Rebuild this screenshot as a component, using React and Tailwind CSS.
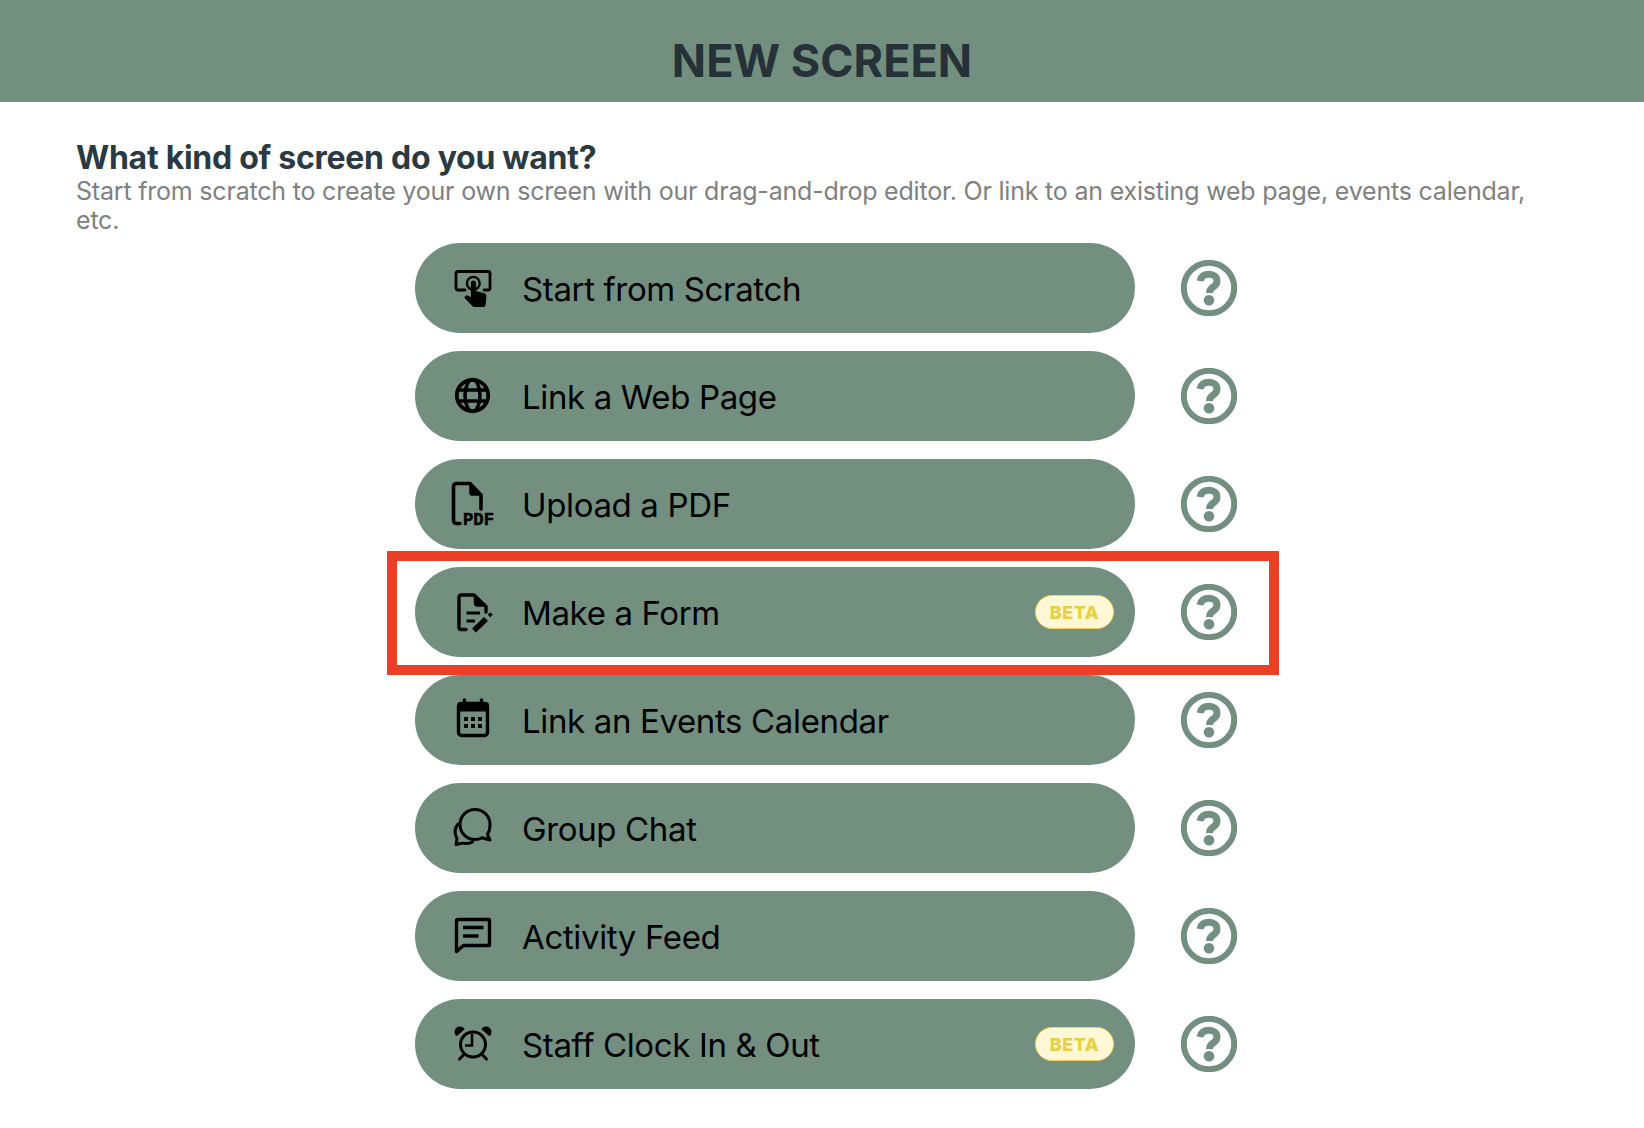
import React from "react";

const Svg = ({ children }) => (
  <svg width="44" height="44" viewBox="0 0 44 44" fill="none" stroke="#000" strokeWidth="3.400" strokeLinecap="round" strokeLinejoin="round" className="overflow-visible">
    {children}
  </svg>
);

const TouchIcon = () => (
  <Svg>
    <path d="M14 24H7a2 2 0 0 1-2-2V7.500a2 2 0 0 1 2-2h30a2 2 0 0 1 2 2V22a2 2 0 0 1-2 2h-4" strokeWidth="2.800" />
    <circle cx="22.300" cy="17.300" r="6.400" strokeWidth="2.400" />
    <path d="M20.500 17a1.900 1.900 0 0 1 3.800 0v8.500l8 2a3 3 0 0 1 2.500 3.200l-.8 8a2 2 0 0 1-2 1.800H24a3 3 0 0 1-2.200-1L14 31.500l1.600-1.600 4.900 2.100z" fill="#000" strokeWidth="1.200" />
  </Svg>
);
const GlobeIcon = () => (
  <Svg>
    <circle cx="21.500" cy="21.500" r="15.700" strokeWidth="3.800" />
    <ellipse cx="21.500" cy="21.500" rx="7.500" ry="16" strokeWidth="3.500" />
    <path d="M6.500 16h30M6.500 27h30" strokeWidth="3.500" strokeLinecap="butt" />
  </Svg>
);
const PdfIcon = () => (
  <Svg>
    <path d="M9 41.500H5.500a3 3 0 0 1-3-3V4.500a3 3 0 0 1 3-3H19L30 13v14" strokeWidth="3.600" />
    <path d="M19 2v9a2 2 0 0 0 2 2h9z" fill="#000" stroke="#000" strokeWidth="1.500" />
    <text x="12" y="42.500" fontFamily="'Liberation Mono', monospace" fontWeight="700" fontSize="19" textLength="31" lengthAdjust="spacingAndGlyphs" fill="#000" stroke="#000" strokeWidth="0.5">PDF</text>
  </Svg>
);
const FormIcon = () => (
  <Svg>
    <path d="M15 39.500H10a2 2 0 0 1-2-2V7a2 2 0 0 1 2-2h13l12 11.500V22" />
    <path d="M23.500 5.500V13a3 3 0 0 0 3 3H35z" fill="#000" strokeWidth="1.500" />
    <path d="M15.500 23H29M15.500 31H24" strokeLinecap="butt" strokeWidth="3.200" />
    <path d="M23 40.500 35 29" strokeWidth="5.500" strokeLinecap="butt" />
    <path d="M38 26 40.500 23.500" strokeWidth="3.600" strokeLinecap="butt" />
  </Svg>
);
const CalendarIcon = () => (
  <Svg>
    <rect x="7.500" y="5.500" width="29" height="32" rx="3" />
    <rect x="7.500" y="5.500" width="29" height="7" fill="#000" strokeWidth="2" />
    <path d="M13.500 2v4M30.500 2v4" />
    <g fill="#000" stroke="none">
      <rect x="13" y="19" width="4" height="4" />
      <rect x="20" y="19" width="4" height="4" />
      <rect x="27" y="19" width="4" height="4" />
      <rect x="13" y="26" width="4" height="4" />
      <rect x="20" y="26" width="4" height="4" />
      <rect x="27" y="26" width="4" height="4" />
    </g>
  </Svg>
);
const ChatIcon = () => (
  <Svg>
    <path d="M24 3.500c-8.500 0-15 6.800-15 15s6.500 15 15 15c2.800 0 5-.6 7-1.800l8 2.300-2.700-5.600c2-2.700 2.700-6 2.700-9.900 0-8.200-6.500-15-15-15z" strokeWidth="3" />
    <path d="M7 18c-3.500 4.500-3.800 9.800-1 14.500L5 38.500c3-.2 5-1.800 8-1.300 3.500.5 6 .1 8.500-1.200" strokeWidth="3" />
  </Svg>
);
const FeedIcon = () => (
  <Svg>
    <path d="M7 5.500h31a.5.5 0 0 1 .5.500v25a.5.5 0 0 1-.5.500H12.500L5.500 37.500V7a1.500 1.500 0 0 1 1.500-1.500z" />
    <path d="M12 13.500h20.500M12 22h15.500" strokeLinecap="butt" />
  </Svg>
);
const AlarmIcon = () => (
  <Svg>
    <circle cx="22" cy="22.500" r="12.500" strokeWidth="3" />
    <path d="M21 12v11.500h-7" strokeWidth="2.600" strokeLinecap="butt" strokeLinejoin="miter" />
    <path d="M5.500 13a4.500 4.500 0 0 1 7-6z" fill="#000" strokeWidth="1.800" />
    <path d="M38.500 13a4.500 4.500 0 0 0-7-6z" fill="#000" strokeWidth="1.800" />
    <path d="M8.500 37 12 33.500M35.500 37 32 33.500" strokeWidth="3" />
  </Svg>
);
const HelpIcon = () => (
  <svg width="56" height="56" viewBox="0 0 56 56" fill="none" stroke="#728f80">
    <circle cx="28" cy="28" r="25.200" strokeWidth="6" />
    <path d="M19 21c.8-4.500 4.300-6.800 8.800-6.800 5 0 8.200 3 8.200 6.800 0 3-1.800 4.700-4 6.200-2.200 1.500-3.500 2.600-3.500 5.800" strokeWidth="7" />
    <circle cx="28" cy="40.300" r="5.300" fill="#728f80" stroke="none" />
  </svg>
);

const Beta = () => (
  <span className="ml-auto mr-[21px] flex h-[34px] w-[79px] items-center justify-center rounded-full border border-[#efd35a] bg-[#fff8d6] text-[18px] font-extrabold tracking-[0.5px] text-[#e6cf45]">
    BETA
  </span>
);

const items = [
  { label: "Start from Scratch", icon: <TouchIcon /> },
  { label: "Link a Web Page", icon: <GlobeIcon /> },
  { label: "Upload a PDF", icon: <PdfIcon /> },
  { label: "Make a Form", icon: <FormIcon />, beta: true, marked: true },
  { label: "Link an Events Calendar", icon: <CalendarIcon /> },
  { label: "Group Chat", icon: <ChatIcon /> },
  { label: "Activity Feed", icon: <FeedIcon /> },
  { label: "Staff Clock In & Out", icon: <AlarmIcon />, beta: true },
];

export default function App() {
  return (
    <div className="min-h-[1128px] bg-white font-['Inter',sans-serif]">
      <header className="flex h-[102px] items-center justify-center bg-[#728f80] pt-[18px]">
        <h1 className="text-[45px] font-bold leading-none text-[#263238]">NEW SCREEN</h1>
      </header>
      <div className="pl-[76px] pr-[90px] pt-[37px]">
        <h2 className="text-[32px] font-bold leading-[38px] tracking-[-0.27px] text-[#2b3a42]">What kind of screen do you want?</h2>
        <p className="text-[25px] leading-[29px] tracking-[-0.2px] text-[#808080]">
          Start from scratch to create your own screen with our drag-and-drop editor. Or link to an existing web page, events calendar, etc.
        </p>
      </div>
      <div className="ml-[415px] mt-[8px] flex w-[822px] flex-col gap-[18px]">
        {items.map((item) => (
          <div key={item.label} className="relative flex items-center">
            <div className="flex h-[90px] w-[720px] items-center rounded-full bg-[#728f80] pl-[36px]">
              <div className="flex w-[44px] items-center justify-center">{item.icon}</div>
              <span className="ml-[27px] pt-[2px] text-[33px] leading-none tracking-[-0.36px] text-black">{item.label}</span>
              {item.beta && <Beta />}
            </div>
            <div className="ml-[46px]">
              <HelpIcon />
            </div>
            {item.marked && (
              <div className="pointer-events-none absolute left-[-28px] top-[-16px] h-[124px] w-[892px] border-[10px] border-[#ec4026]" />
            )}
          </div>
        ))}
      </div>
    </div>
  );
}
